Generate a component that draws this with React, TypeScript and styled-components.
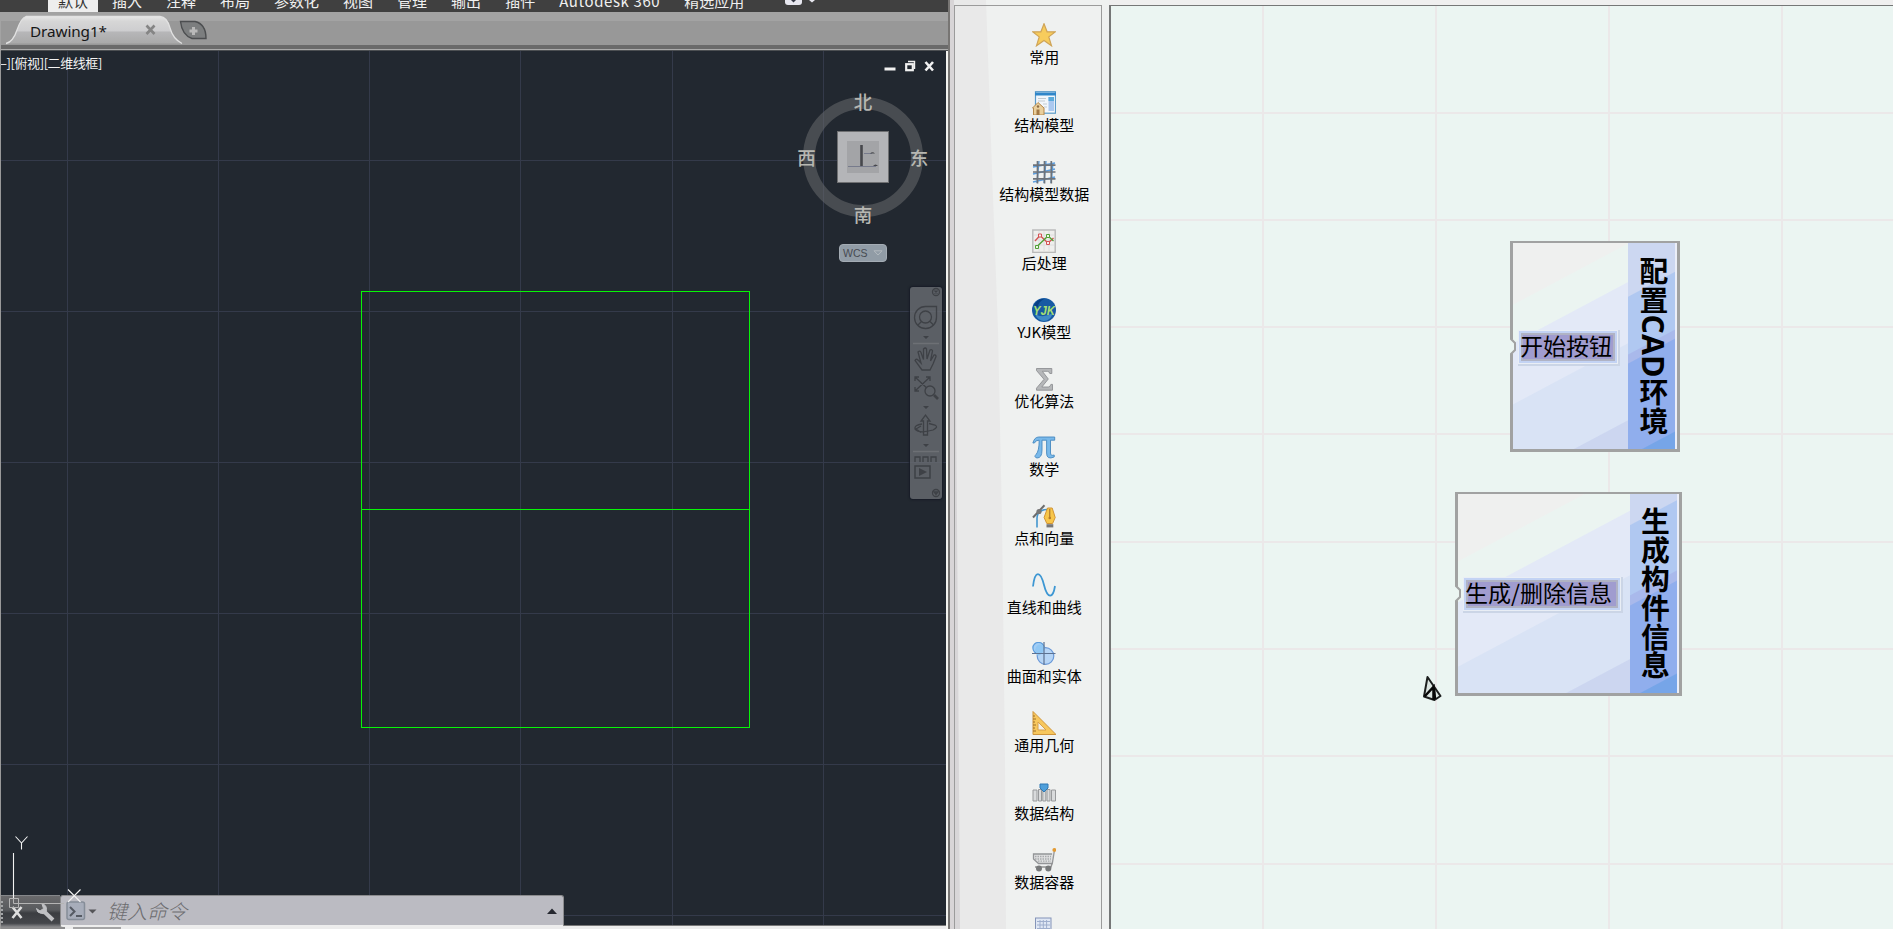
import React from 'react';
import styled, { createGlobalStyle } from 'styled-components';

const cjk = '"Noto Sans CJK SC", "Noto Sans", sans-serif';

const GlobalStyle = createGlobalStyle`
  * { box-sizing: border-box; }
  body { margin: 0; overflow: hidden; font-family: ${cjk}; }
  svg { display: block; }
`;

const Screen = styled.div`
  display: flex;
  width: 1893px;
  height: 929px;
  overflow: hidden;
  background: #eff1f0;
`;

/* ---------- CAD window ---------- */

const CadWindow = styled.section`
  flex: none;
  width: 948px;
  display: flex;
  flex-direction: column;
`;

const Ribbon = styled.nav`
  flex: none;
  height: 12px;
  overflow: hidden;
  display: flex;
  align-items: flex-end;
  gap: 4px;
  padding-left: 48px;
  background: #404040;
`;

const RibbonTab = styled.span<{ $active?: boolean; $latin?: boolean }>`
  height: 22px;
  padding: 0 10px;
  line-height: 22px;
  font-size: 15px;
  letter-spacing: ${(p) => (p.$latin ? '0.6px' : '0')};
  white-space: nowrap;
  color: ${(p) => (p.$active ? '#333' : '#f0f0f0')};
  background: ${(p) => (p.$active ? '#eeeeee' : 'transparent')};
`;

const RibbonMenu = styled.div`
  margin-left: 27px;
`;

const FileTabs = styled.div`
  flex: none;
  height: 39px;
  display: flex;
  align-items: flex-start;
  border-left: 1px solid #a3a3a3;
  background: linear-gradient(
    #a3a3a3 0 9px, #989898 9px 33px, #6a6a6a 33px 37px, #ababab 37px 38px, #4c4f52 38px
  );
`;

const FileTab = styled.div`
  position: relative;
  width: 176px;
  height: 33px;
  display: flex;
  align-items: center;
  padding: 4px 0 0 29px;
  font-family: "Noto Sans", sans-serif;
  font-size: 15.3px;
  letter-spacing: -0.1px;
  color: #161616;
  svg { position: absolute; left: 0; top: 0; }
  span { position: relative; line-height: 24px; }
`;

const NewTab = styled.div`
  padding-top: 8px;
  margin-left: 2px;
`;

const Viewport = styled.div`
  position: relative;
  flex: 1;
  overflow: hidden;
  background: #222830;
  border-left: 1px solid #999;
  border-right: 2px solid #f3f3ef;
`;

const ViewLabel = styled.div`
  position: absolute;
  left: -1px;
  top: 4px;
  font-size: 13px;
  line-height: 16px;
  letter-spacing: -0.42px;
  color: #f4f4f4;
  white-space: nowrap;
`;

const Compass = styled.span<{ $x: number; $y: number }>`
  position: absolute;
  left: ${(p) => p.$x - 1}px;
  top: ${(p) => p.$y - 52}px;
  transform: translate(-50%, -50%);
  font-size: 18.5px;
  font-weight: 500;
  line-height: 20px;
  color: #b7b7b2;
`;

const CubeFace = styled.div`
  position: absolute;
  left: 836px;
  top: 80px;
  width: 52px;
  height: 52px;
  padding: 9px;
  background: #b4b5b8;
  border: 1px solid #6f7072;
`;

const CubeCore = styled.div`
  width: 32px;
  height: 32px;
  background: #a3a4a7;
`;

const Wcs = styled.div`
  position: absolute;
  left: 838px;
  top: 193px;
  width: 48px;
  height: 18px;
  display: flex;
  align-items: center;
  gap: 5px;
  padding: 0 0 1px 3px;
  border: 1px solid #a4acb4;
  border-radius: 4px;
  background: #919ca6;
  color: #474b52;
  font: 10.5px "Liberation Sans", sans-serif;
`;

const NavBar = styled.div`
  position: absolute;
  left: 909px;
  top: 236px;
  width: 32px;
  height: 212px;
  border-radius: 3px;
  background: rgba(104, 107, 113, 0.82);
  box-shadow: 0 0 2px 1px #171b26;
`;

const BottomStrip = styled.div`
  position: absolute;
  left: 0;
  right: 0;
  bottom: 0;
  height: 4px;
  background:
    linear-gradient(90deg, #8b8b8c 0 64px, transparent 64px 72px, #a5a5a6 72px 120px, transparent 120px),
    #ececec;
  border-top: 1px solid #777;
`;

const CommandBar = styled.div`
  position: absolute;
  left: 0;
  bottom: 2px;
  width: 563px;
  height: 32px;
  display: flex;
`;

const CommandTools = styled.div`
  width: 59px;
  border-top: 1px solid #85878a;
  background: linear-gradient(#6a6a6c, #585a5d 45%, #3b3d41 55%, #45474b 88%, #8a8a8c);
`;

const CommandInput = styled.div`
  flex: 1;
  display: flex;
  align-items: center;
  padding-right: 6px;
  border: 1px solid #8b8b8d;
  border-bottom: 2px solid #ededed;
  border-radius: 3px;
  background: #bbbbc2;
`;

const Placeholder = styled.span`
  flex: 1;
  padding-left: 10px;
  font-size: 20px;
  line-height: 28px;
  font-style: italic;
  font-weight: 300;
  color: #6c6c6f;
`;

/* ---------- component palette ---------- */

const Divider = styled.div`
  flex: none;
  width: 6px;
  background: linear-gradient(90deg, #777573 0 2px, #d8d5d7 2px);
`;

const Palette = styled.aside`
  position: relative;
  flex: none;
  width: 155px;
  background: #eff1f0;
  padding-top: 5px;
  &::before {
    content: '';
    position: absolute;
    inset: 0;
    background: #e9e9e9;
    clip-path: polygon(0 0, 32px 0, 38px 170px, 44px 330px, 48px 520px, 51px 760px, 52px 929px, 0 929px);
  }
  &::after {
    content: '';
    position: absolute;
    inset: 0;
    background: #d8d6d8;
    clip-path: polygon(0 60px, 2px 400px, 4px 640px, 6px 929px, 0 929px);
  }
`;

const PaletteFrame = styled.div`
  position: relative;
  z-index: 1;
  width: 148px;
  height: 924px;
  padding: 16.6px 0 0 32.6px;
  border: 1px solid #9b9b9b;
  border-bottom: 0;
  overflow: hidden;
`;

const PaletteItem = styled.div`
  height: 68.8px;
  display: flex;
  flex-direction: column;
  align-items: center;
  font-size: 15px;
  line-height: 20px;
  white-space: nowrap;
  color: #000;
  svg { flex: none; }
`;

/* ---------- node canvas ---------- */

const CanvasWrap = styled.main`
  flex: 1;
  padding-top: 5px;
  background: #efefef;
`;

const Canvas = styled.div`
  position: relative;
  height: 924px;
  overflow: hidden;
  border-left: 2px solid #757777;
  border-top: 1px solid #757777;
  background: #ebf5f2;
`;

const Node = styled.div<{ $x: number; $y: number; $w: number; $h: number }>`
  position: absolute;
  left: ${(p) => p.$x - 1111}px;
  top: ${(p) => p.$y - 6}px;
  width: ${(p) => p.$w}px;
  height: ${(p) => p.$h}px;
  display: flex;
  border: solid #a1a2a2;
  border-width: 3px;
  border-top-width: 2px;
  background: #ebeef8;
`;

const NodeBody = styled.div<{ $s: number[] }>`
  flex: 1;
  display: flex;
  align-items: center;
  background: linear-gradient(
    152deg,
    #eff0ef ${(p) => p.$s[0]}px, #ebf4f1 ${(p) => p.$s[0] + 1}px ${(p) => p.$s[1]}px,
    #e3e9f7 ${(p) => p.$s[1] + 1}px ${(p) => p.$s[2]}px,
    #d9e3f5 ${(p) => p.$s[2] + 1}px ${(p) => p.$s[3]}px,
    #ccd6f0 ${(p) => p.$s[3] + 1}px
  );
`;

const NodeTitle = styled.div<{ $s: number[] }>`
  width: 47px;
  margin-right: 2px;
  padding-left: 4px;
  display: flex;
  align-items: center;
  justify-content: center;
  writing-mode: vertical-rl;
  font-size: 28.8px;
  font-weight: 700;
  line-height: 43px;
  white-space: nowrap;
  color: #000;
  background: linear-gradient(
    152deg,
    #ccd7f1 ${(p) => p.$s[0]}px, #b0c8f1 ${(p) => p.$s[0] + 1}px ${(p) => p.$s[1]}px,
    #a9b9eb ${(p) => p.$s[1] + 1}px ${(p) => p.$s[2]}px,
    #90aeed ${(p) => p.$s[2] + 1}px ${(p) => p.$s[3]}px,
    #76a5e8 ${(p) => p.$s[3] + 1}px
  );
`;

const LatinRun = styled.span`
  font-family: "Open Sans", "Noto Sans", sans-serif;
  font-size: 30.5px;
`;

const NodeButton = styled.div<{ $w: number; $dy: number }>`
  width: ${(p) => p.$w}px;
  height: 34px;
  margin: ${(p) => p.$dy}px 0 0 4.500px;
  display: flex;
  align-items: center;
  padding: 0 0 5px 1.500px;
  font-size: 23px;
  line-height: 24px;
  white-space: nowrap;
  color: #000;
  background: #a09ccf;
  border: 1px solid #e9eef5;
  box-shadow: inset 0 0 0 2px #c3d3f4, inset 0 0 0 4px #b0b3c4, 1px 1px 0 1px #cbd5e6;
`;

const Overlay = styled.svg<{ $x: number; $y: number }>`
  position: absolute;
  left: ${(p) => p.$x}px;
  top: ${(p) => p.$y}px;
`;

/* ---------- palette icons, 24 x 24 ---------- */

const icons: Record<string, React.ReactNode> = {
  star: <path d="M12 .8l3.1 8h8.3l-6.6 5.1 2.7 8.9L12 17.600l-7.500 5.200 2.700-8.900L.6 8.800h8.300z" fill="#f7cc5c" stroke="#cfa457" strokeWidth="1.2" />,
  model: (
    <>
      <rect x="3.5" y=".7" width="20" height="21.5" fill="#f2f7fb" stroke="#5b9bc9" strokeWidth="1.2" />
      <path d="M3 1.5h21v3H3z" fill="#2f86c9" />
      <path d="M16.5 6h5.5v14h-5.5z" fill="#abc9f0" />
      <path d="M16.5 6h5.5v4h-5.5z" fill="#5aaada" />
      <path d="M6 7.5h8M6 10h7M11 13h4M12 16h3" stroke="#c3cbd1" />
      <path d="M.5 17L6 11.5l6 5.5v7H1.5v-7z" fill="#e9cf9c" stroke="#b58748" />
      <path d="M4.5 18.5h3V24h-3z" fill="#a27845" />
      <circle cx="6" cy="15.5" r="1.2" fill="#8d6c43" />
    </>
  ),
  grid: (
    <>
      <path d="M1 7l22-4M1 14l22-5M1 22l22-5M7 1l-2 22M14 1l-2 22M21 3l-2 20" stroke="#5b9ddd" strokeWidth="1.4" />
      <path d="M1 5.2h22.5M1 12h22.5M1 18.8h22.5M5.5 1v22.5M12.5 1v22.5M19.3 1v22.5" stroke="#6d737a" strokeWidth="1.7" />
    </>
  ),
  post: (
    <>
      <rect x=".8" y="1" width="22.4" height="22.4" fill="#efefed" stroke="#b9b9b9" strokeWidth="1.4" />
      <path d="M2 6h20M2 11h20M2 16h20M7 2v20M12 2v20M17 2v20" stroke="#dedede" />
      <path d="M3 12l5-5.5 8 7.5 5.500-5" fill="none" stroke="#d35353" strokeWidth="1.3" />
      <path d="M4.500 18L16 7l5.500 5" fill="none" stroke="#51a035" strokeWidth="1.3" />
      <path d="M3.500 16.500h3v3h-3zM14.500 5.500h3v3h-3z" fill="#eef5e8" stroke="#51a035" />
      <path d="M6.500 5h3v3h-3zM14.500 12.500h3v3h-3z" fill="#faecec" stroke="#d35353" />
    </>
  ),
  yjk: (
    <>
      <circle cx="12" cy="12" r="12" fill="#175aa3" />
      <path d="M3 16q8 5 18-1-3 8-9 8-6 0-9-7z" fill="#3f8ac6" />
      <path d="M2 7q4-7 10-6-6 3-6 8z" fill="#073f84" />
      <text x="12" y="17" fontFamily="Liberation Sans, sans-serif" fontSize="13" fontWeight="700" fontStyle="italic" textAnchor="middle" fill="#a5df72" textLength="22" lengthAdjust="spacingAndGlyphs">YJK</text>
    </>
  ),
  sigma: <path d="M4.500 1.500h15.300v5h-2q-.4-2.200-2.500-2.200h-5l6 7.700-6.500 8h6.500q2 0 2.600-2.600h1.600v5.800h-16v-2L12 12.300 4.500 3.500z" fill="#b5b7b9" stroke="#8f9194" strokeWidth=".9" />,
  pi: <path d="M.9 8q1.500-6 6-6h15.800v3.200h-4.200V18q.1 3.200 3.700 2v2q-7.600 3.200-7.600-4V5.200H10V15q0 8-5 8-3.600-1-.9-3.600Q7.200 16 7.200 5.200 3.800 5 2.400 8z" fill="#79b9ea" stroke="#4689c0" strokeWidth=".9" />,
  pen: (
    <>
      <path d="M5 23.500v-9Q5 5 18 5.200" fill="none" stroke="#4396cf" strokeWidth="1.6" />
      <path d="M1 13.500L12.500 1.200" stroke="#6b6b6b" strokeWidth="2" />
      <circle cx="7" cy="7.500" r="2.600" fill="#777" />
      <path d="M15.500 4h4.700l3 9.500-2.600 6h-5.800l-2.700-6z" fill="#f8c64a" stroke="#d09436" />
      <path d="M17.800 5v8.500" stroke="#9f6b27" />
      <circle cx="17.800" cy="14" r="1.300" fill="#b57a26" />
      <path d="M14.500 20.200h6.800v3.200h-6.800z" fill="#777" />
    </>
  ),
  curve: <path d="M1 13.500C3-3.500 8.500-2 12 12S21 26 23 13" fill="none" stroke="#3d97d3" strokeWidth="1.8" />,
  surface: (
    <>
      <circle cx="6.500" cy="6" r="5.600" fill="#a2cef5" stroke="#5b9cdc" strokeWidth="1.2" />
      <circle cx="13.500" cy="14" r="8.300" fill="#b6d5f6" stroke="#6898d8" strokeWidth="1.2" />
      <path d="M3 8Q5 1 10 3t1 7-6 3z" fill="#8fc7f4" />
      <path d="M0 11.500h23.500M12 0v23" stroke="#5c7292" strokeWidth="1.2" />
    </>
  ),
  triangle: (
    <>
      <path d="M1 .5L24 23.500H1z" fill="#f7c75d" stroke="#cf953c" />
      <path d="M6 11l8 8H6z" fill="#f3f1eb" stroke="#d8a14a" />
      <path d="M1 5h2M1 8h3M1 11h2M1 14h3M1 17h2M1 20h3" stroke="#9c6f28" />
    </>
  ),
  struct: (
    <>
      <path d="M1 11h4v11H1zM6.500 10.500h3V22h-3zM10.800 11h3v11h-3zM15 10.500h3V22h-3zM19.500 11h4v11h-4z" fill="#d9dbdc" stroke="#989a9c" />
      <path d="M8 5h8v4l-4 4-4-4z" fill="#4e9fda" stroke="#2e78b4" />
    </>
  ),
  cart: (
    <>
      <path d="M22.500 2l-2.200 13.500H6.500L1.500 11V6h18.500" fill="#dfe0e1" stroke="#939597" strokeWidth="1.3" />
      <path d="M3 8.500h16M3 11h16M6 13.200h13" stroke="#a8aaac" strokeWidth="1.300" strokeDasharray="1.5 1" />
      <path d="M3 19h16l1-3.500" fill="none" stroke="#929292" strokeWidth="1.4" />
      <circle cx="7" cy="20.600" r="3" fill="#77797a" />
      <circle cx="16.300" cy="20.600" r="3" fill="#77797a" />
      <circle cx="22.300" cy="1.900" r="1.900" fill="#e39a32" />
    </>
  ),
  table: (
    <>
      <rect x="3.500" y="1" width="15.500" height="22" fill="#dfe7f4" stroke="#8494b8" />
      <path d="M5 4.500h13M5 8h13M5 11.500h13M8 3v20M11.300 3v20M14.600 3v20" stroke="#9fafce" />
    </>
  ),
};

const paletteItems: [string, string][] = [
  ['star', '常用'], ['model', '结构模型'], ['grid', '结构模型数据'], ['post', '后处理'],
  ['yjk', 'YJK模型'], ['sigma', '优化算法'], ['pi', '数学'], ['pen', '点和向量'],
  ['curve', '直线和曲线'], ['surface', '曲面和实体'], ['triangle', '通用几何'],
  ['struct', '数据结构'], ['cart', '数据容器'], ['table', ''],
];

const ribbonTabs = ['默认', '插入', '注释', '布局', '参数化', '视图', '管理', '输出', '插件', 'Autodesk 360', '精选应用'];

function Drawing() {
  return (
    <Overlay $x={-1} $y={0} width="946" height="878" viewBox="0 51 946 878" fill="none" shapeRendering="crispEdges">
      {[67, 218, 369, 520, 672, 823].map((x) => <path key={x} d={`M${x}.5 51V929`} stroke="#343a4a" />)}
      {[160, 311, 462, 613, 764, 915].map((y) => <path key={y} d={`M0 ${y}.5H946`} stroke="#343a4a" />)}
      <path d="M361.500 291.500H749.500V727.500H361.500Z M361.500 509.500H749.500" stroke="#07f407" />
    </Overlay>
  );
}

function NavIcons() {
  return (
    <svg width="32" height="212" viewBox="0 0 32 212" fill="none" stroke="#3e4146" strokeWidth="1.3">
      <circle cx="26" cy="5" r="3.5" /><path d="M24.500 3.500l3 3m0-3l-3 3" />
      <path d="M15.500 19.500H26.500V30A11 11 0 1 1 15.500 19.500z" />
      <circle cx="15.500" cy="30" r="6" /><path d="M8 38l3.500-3.500M23.500 38L20 34.500" />
      <path d="M13 49h6l-3 3zM13 119h6l-3 3zM13 157h6l-3 3z" fill="#3e4146" stroke="none" />
      <path d="M3 56.500h26M3 164.500h26" stroke="#6d7075" />
      <path d="M12 83l-7-9.500q1-2.500 3.500 0L11 76 8 65q2-2 3 .5l2.500 7L13.500 62q2-2 3 0l.5 10 3-9q2-1 2.500 1l-2 10 3.500-6q2-.5 2 1.500L23 77l-3 6z" />
      <path d="M5 90l15 14M20 90L5 104M5 94v-4h4M16 90h4v4M5 100v4h4" />
      <circle cx="20" cy="104" r="5" fill="#5c6066" /><path d="M24 108l4 4" strokeWidth="2.600" />
      <path d="M13.500 148v-14h-2.500l4.500-6 4.500 6h-2.500v14z" />
      <path d="M12 137q-8 1-7 5 4 5 18 1 6-3 2-5l-6-1.500M11 139l-5 3 5 3.500" />
      <path d="M5 175v-5h5v5M13 175v-5h5v5M21 175v-5h5v5" />
      <path d="M5 179h15v12H5z" strokeWidth="1.500" /><path d="M9 181l8 4-8 4z" fill="#3e4146" stroke="none" />
      <circle cx="26" cy="206" r="3.500" /><path d="M24 205h4l-2 2.500z" />
    </svg>
  );
}

function CommandIcons() {
  return (
    <svg width="59" height="30" viewBox="1 896 59 30">
      <path d="M2 901v22" stroke="#a3a5a7" strokeWidth="2" strokeDasharray="2 2" />
      <path d="M12.500 907l9 11M21.500 907l-9 11" stroke="#dedede" strokeWidth="2.600" />
      <path d="M43.500 911l9.500 9" stroke="#c0c1c4" strokeWidth="4" />
      <path d="M42 904q4.500.5 4.500 5.500t-5 4q-4.500-.5-5-5l3.500 2.500 3.500-2.500z" fill="#c0c1c4" stroke="#c0c1c4" />
    </svg>
  );
}

function Notch({ x, y }: { x: number; y: number }) {
  return (
    <Overlay $x={x} $y={y} width="8" height="19" viewBox="0 0 8 19">
      <path d="M0 0h2v2l3 4v7l-3 4v2H0z" fill="#ebf5f2" />
      <path d="M1 0v2l4 4v7l-4 4v2" fill="none" stroke="#a1a2a2" strokeWidth="2" />
    </Overlay>
  );
}

export default function App() {
  return (
    <Screen>
      <GlobalStyle />
      <CadWindow>
        <Ribbon>
          {ribbonTabs.map((t, i) => (
            <RibbonTab key={t} $active={i === 0} $latin={/^[A-Z]/.test(t)}>{t}</RibbonTab>
          ))}
          <RibbonMenu>
            <svg width="34" height="12" viewBox="0 0 34 12">
              <rect x="0" y="-8" width="17" height="13" rx="3" fill="#e8e8f0" />
              <path d="M6 0h5L8.500 2.500z" fill="#353845" />
              <path d="M24 0h6l-3 2.500z" fill="#e8e8f0" />
            </svg>
          </RibbonMenu>
        </Ribbon>
        <FileTabs>
          <FileTab>
            <svg width="184" height="33" viewBox="1 12 184 33">
              <defs>
                <linearGradient id="tab" x1="0" y1="0" x2="0" y2="1">
                  <stop offset="0" stopColor="#e6e6e6" /><stop offset=".18" stopColor="#d6d6d6" />
                  <stop offset=".55" stopColor="#cdcdcf" /><stop offset=".56" stopColor="#b7b7b9" />
                  <stop offset="1" stopColor="#a9a9a9" />
                </linearGradient>
              </defs>
              <path d="M6 43.500Q13 42 17 30T26 16.500H160Q167 17 170 28T182 43.500z" fill="url(#tab)" />
              <path d="M6 43.500Q13 42 17 30T26 16.500H160Q167 17 170 28T182 43.500" fill="none" stroke="#e2e2e2" strokeWidth="1.300" />
              <path d="M146.500 25.500l8 8.500m0-8.500l-8 8.500" stroke="#858585" strokeWidth="2.600" />
            </svg>
            <span>Drawing1*</span>
          </FileTab>
          <NewTab>
            <svg width="30" height="20" viewBox="0 0 30 20">
              <path d="M1.500 1.500H16Q27 4 27 18.500H13Q3 15 1.500 1.500z" fill="#7c7e7f" stroke="#4c4e50" strokeWidth="1.400" />
              <path d="M14.500 7v8M10.500 11h8" stroke="#b9b9b9" strokeWidth="3" />
            </svg>
          </NewTab>
        </FileTabs>
        <Viewport>
          <Drawing />
          <ViewLabel>–][俯视][二维线框]</ViewLabel>
          <Overlay $x={880} $y={5} width="60" height="20" viewBox="881 56 60 20" fill="none" stroke="#f1f1f1">
            <path d="M884.500 69h11" strokeWidth="3" />
            <rect x="906.200" y="64.200" width="6.600" height="6" strokeWidth="2.200" />
            <path d="M908 61.500h6.500V69" strokeWidth="1.400" />
            <path d="M925.500 62l7.500 8.500M933 62l-7.500 8.500" strokeWidth="2.600" />
          </Overlay>
          <Overlay $x={801} $y={45} width="122" height="122" viewBox="0 0 122 122">
            <circle cx="61" cy="61" r="54" fill="none" stroke="#6c6e70" strokeOpacity=".52" strokeWidth="12" />
          </Overlay>
          <Compass $x={863} $y={101.5}>北</Compass>
          <Compass $x={863} $y={214.5}>南</Compass>
          <Compass $x={806.5} $y={157.5}>西</Compass>
          <Compass $x={919} $y={157.5}>东</Compass>
          <CubeFace>
            <CubeCore>
              <svg width="32" height="32" viewBox="0 0 32 32">
                <path d="M14.500 4v21" stroke="#47484d" strokeWidth="2.600" />
                <path d="M17 12.500h8M1 25.500h28" stroke="#777b8c" />
                <path d="M23 12.500q2.500-2.500 5 0zM26 25q2.500-3 5 0z" fill="#47484d" />
              </svg>
            </CubeCore>
          </CubeFace>
          <Wcs>
            WCS
            <svg width="10" height="6" viewBox="0 0 10 6"><path d="M1 .8h8L5 5z" fill="none" stroke="#b3babf" /></svg>
          </Wcs>
          <NavBar><NavIcons /></NavBar>
          <BottomStrip />
          <CommandBar>
            <CommandTools><CommandIcons /></CommandTools>
            <CommandInput>
              <svg width="36" height="22" viewBox="0 0 36 22">
                <rect x="6" y="2" width="17.500" height="17.500" rx="2" fill="#a7adba" stroke="#858d98" strokeWidth="1.500" />
                <path d="M9 7l4.500 4.500L9 16M15 16h6" fill="none" stroke="#555a63" strokeWidth="2" />
                <path d="M27.500 9.500h8l-4 4z" fill="#555558" />
              </svg>
              <Placeholder>键入命令</Placeholder>
              <svg width="10" height="6" viewBox="0 0 10 6"><path d="M0 6l5-5.500L10 6z" fill="#25272f" /></svg>
            </CommandInput>
          </CommandBar>
          <Overlay $x={-1} $y={779} width="90" height="80" viewBox="0 830 90 80" fill="none" stroke="#f2f2f2">
            <path d="M13.500 853v45M15.500 836.500l6 6.500 6-6.500M21.500 843v6.500M68 889.500l12.500 12.500M80.500 889.500L68 902" strokeWidth="1.100" />
            <path d="M13.500 898v5.500H64M9.500 898.500h9v9h-9z" stroke="#b4b4b4" />
          </Overlay>
        </Viewport>
      </CadWindow>
      <Divider />
      <Palette>
        <PaletteFrame>
          {paletteItems.map(([icon, label]) => (
            <PaletteItem key={icon}>
              <svg width="24" height="24" viewBox="0 0 24 24" fill="none">{icons[icon]}</svg>
              {label}
            </PaletteItem>
          ))}
        </PaletteFrame>
      </Palette>
      <CanvasWrap>
        <Canvas>
          <Overlay $x={0} $y={0} width="782" height="923" viewBox="1111 6 782 923" stroke="#ebe8e9" strokeWidth="2">
            {[1263, 1436, 1609, 1782].map((x) => <path key={x} d={`M${x} 6V929`} />)}
            {[113, 220, 327, 434, 542, 649, 756, 864].map((y) => <path key={y} d={`M1111 ${y}H1893`} />)}
          </Overlay>
          <Node $x={1510} $y={241} $w={170} $h={211}>
            <NodeBody $s={[54, 88, 142, 210]}><NodeButton $w={100} $dy={2}>开始按钮</NodeButton></NodeBody>
            <NodeTitle $s={[47, 98, 106, 188]}><span>配置<LatinRun>CAD</LatinRun>环境</span></NodeTitle>
          </Node>
          <Node $x={1455} $y={492} $w={227} $h={204}>
            <NodeBody $s={[59, 95, 152, 226]}><NodeButton $w={158} $dy={1}>生成/删除信息</NodeButton></NodeBody>
            <NodeTitle $s={[27, 89, 98, 180]}>生成构件信息</NodeTitle>
          </Node>
          <Notch x={399} y={331} />
          <Notch x={344} y={578} />
          <Overlay $x={311} $y={669} width="22" height="28" viewBox="0 0 22 28">
            <path d="M5.500 2L18.500 21l-6 4L2 21.500z" fill="#dce5e2" stroke="#1d1f1f" strokeWidth="2" strokeLinejoin="round" />
            <path d="M2.500 21.500L11.500 12v13M12 13l1 11" fill="none" stroke="#080808" strokeWidth="2.500" />
          </Overlay>
        </Canvas>
      </CanvasWrap>
    </Screen>
  );
}
